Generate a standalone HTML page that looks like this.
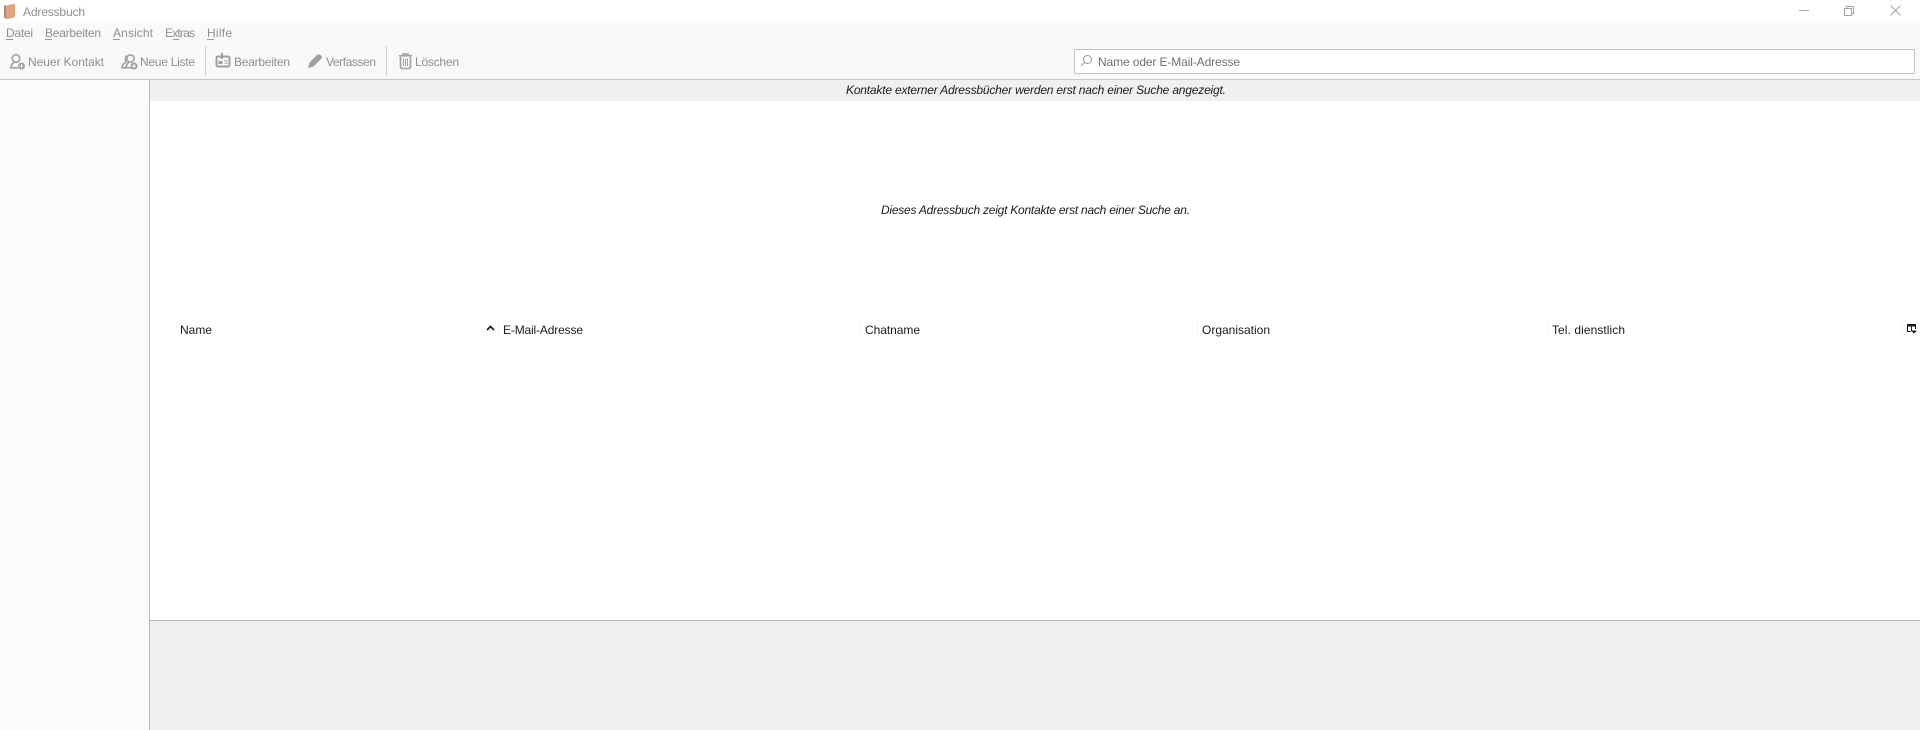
<!DOCTYPE html>
<html lang="de"><head><meta charset="utf-8"><title>Adressbuch</title>
<style>
html,body{margin:0;padding:0;width:1920px;height:730px;overflow:hidden;background:#fff}
svg{display:block}
text{font-family:"Liberation Sans",sans-serif;font-size:12px}
.g{fill:#8f8f8f}
.k{fill:#1a1a1a}
.i{font-style:italic;fill:#1a1a1a}
.s{fill:none;stroke:#a0a0a0;stroke-width:1.6}
.f{fill:#a0a0a0}
</style></head><body>
<svg width="1920" height="730" viewBox="0 0 1920 730" xmlns="http://www.w3.org/2000/svg">
<rect width="1920" height="730" fill="#fff"/>
<rect y="23" width="1920" height="56" fill="#f9f9fb"/>
<rect y="79" width="1920" height="1" fill="#c8c8ca"/>
<rect y="80" width="149" height="650" fill="#fbfbfb"/>
<rect x="150" y="80" width="1770" height="21" fill="#f0f0f0"/>
<rect x="150" y="620" width="1770" height="110" fill="#f0f0f0"/>
<rect x="150" y="620" width="1770" height="1" fill="#b8b8bc"/>
<rect x="149" y="80" width="1" height="650" fill="#b4b4bc"/>

<!-- app icon -->
<path d="M4 6 L13 4 V18 L7 19 Q4 18 4 16Z" fill="#c9c3bd"/>
<path d="M6 6 L15 3.5 V17 L6 19Z" fill="#e0a57f"/>
<path d="M4 5 L6 6 V19 L4 17Z" fill="#9a8f86"/>

<text class="g" x="23" y="16" textLength="62">Adressbuch</text>

<!-- menu -->
<text class="g" x="6" y="37" textLength="27">Datei</text>
<text class="g" x="45" y="37" textLength="56">Bearbeiten</text>
<text class="g" x="113" y="37" textLength="40">Ansicht</text>
<text class="g" x="165" y="37" textLength="30">Extras</text>
<text class="g" x="207" y="37" textLength="25">Hilfe</text>
<rect x="6" y="39" width="7" height="1" fill="#9a9a9a"/>
<rect x="45" y="39" width="7" height="1" fill="#9a9a9a"/>
<rect x="113" y="39" width="7" height="1" fill="#9a9a9a"/>
<rect x="173" y="39" width="6" height="1" fill="#9a9a9a"/>
<rect x="207" y="39" width="7" height="1" fill="#9a9a9a"/>

<!-- toolbar icons -->
<g>
<circle cx="16" cy="58.500" r="3.800" class="s"/>
<path class="s" d="M14 62.500 Q10.800 65 10.800 67.800 H18"/>
<circle cx="21.500" cy="66" r="3.500" fill="#a0a0a0"/>
<path d="M19.500 66H23.500M21.500 64V68" stroke="#fbfbfb" stroke-width="1"/>
</g>
<g>
<circle cx="130.500" cy="58.500" r="3.600" class="s"/>
<path class="s" d="M128.500 62.500 Q126 65 126 67.800 H132"/>
<path class="s" d="M126.500 55.500 Q124.500 59 126 62 Q122 64.500 122 67.800 H126"/>
<circle cx="134" cy="66" r="3.500" fill="#a0a0a0"/>
<path d="M132 66H136M134 64V68" stroke="#fbfbfb" stroke-width="1"/>
</g>
<rect x="205" y="46" width="1" height="30" fill="#cfcfd1"/>
<g>
<rect x="216.500" y="56.500" width="13" height="10" rx="1.500" fill="none" stroke="#a0a0a0" stroke-width="2"/>
<rect x="221" y="53" width="2" height="6" fill="#a0a0a0"/>
<rect x="224.500" y="60" width="3" height="1.200" fill="#a0a0a0"/>
<rect x="224.500" y="62.500" width="3" height="1.200" fill="#a0a0a0"/>
<rect x="218.500" y="61" width="4" height="3" fill="#a0a0a0"/>
</g>
<path class="f" d="M308 68 L309.500 62.500 L317 55 Q319 53.500 320.500 55 L321.500 56 Q322.500 57.500 321 59 L313.500 66.500Z"/>
<rect x="386" y="46" width="1" height="30" fill="#cfcfd1"/>
<g>
<path class="s" d="M400.500 57 V66.500 Q400.500 68.500 402.500 68.500 H408.500 Q410.500 68.500 410.500 66.500 V57"/>
<path class="s" d="M399 55.800 H412 M403 55.500 V54 H408 V55.500"/>
<path d="M403.500 58.500V66M405.500 58.500V66M407.500 58.500V66" stroke="#a0a0a0" stroke-width="1"/>
</g>

<!-- toolbar text -->
<text class="g" x="28" y="66" textLength="76">Neuer Kontakt</text>
<text class="g" x="140" y="66" textLength="55">Neue Liste</text>
<text class="g" x="234" y="66" textLength="56">Bearbeiten</text>
<text class="g" x="326" y="66" textLength="50">Verfassen</text>
<text class="g" x="415" y="66" textLength="44">Löschen</text>

<!-- search -->
<rect x="1074.500" y="49.500" width="840" height="24" rx="1.500" fill="#fff" stroke="#c2c2c2"/>
<circle cx="1087.500" cy="59.500" r="4" fill="none" stroke="#999"/>
<path d="M1084.500 62.500 L1081 66" stroke="#999" fill="none"/>
<text x="1098" y="66" fill="#707070" textLength="142">Name oder E-Mail-Adresse</text>

<!-- window controls -->
<rect x="1799" y="10" width="10" height="1" fill="#a5a5a5"/>
<path d="M1844.500 8.500H1851.500V15.500H1844.500Z M1846.500 8.500V6.500H1853.500V13.500H1851.500" fill="none" stroke="#a5a5a5"/>
<path d="M1890.500 5.500L1900.500 15.500M1900.500 5.500L1890.500 15.500" stroke="#a5a5a5" fill="none"/>

<!-- notifications -->
<text class="i" x="846" y="94" textLength="380">Kontakte externer Adressbücher werden erst nach einer Suche angezeigt.</text>
<text class="i" x="881" y="214" textLength="309">Dieses Adressbuch zeigt Kontakte erst nach einer Suche an.</text>

<!-- header -->
<text class="k" x="180" y="334" textLength="32">Name</text>
<path d="M487 330 L490.500 326.500 L494 330" fill="none" stroke="#1a1a1a" stroke-width="1.700"/>
<rect x="498" y="320" width="1" height="16" fill="#f6f6f6"/>
<text class="k" x="503" y="334" textLength="80">E-Mail-Adresse</text>
<rect x="860" y="320" width="1" height="16" fill="#f8f8f8"/>
<text class="k" x="865" y="334" textLength="55">Chatname</text>
<rect x="1197" y="320" width="1" height="16" fill="#f8f8f8"/>
<text class="k" x="1202" y="334" textLength="68">Organisation</text>
<rect x="1547" y="320" width="1" height="16" fill="#f8f8f8"/>
<text class="k" x="1552" y="334" textLength="73">Tel. dienstlich</text>
<rect x="1902" y="320" width="1" height="16" fill="#f6f6f6"/>
<path d="M1907.500 324.500V331.500H1911M1915.500 324.500V329M1911.500 325V331" fill="none" stroke="#1a1a1a"/>
<rect x="1907" y="324" width="9" height="2.500" fill="#1a1a1a"/>
<path d="M1911 330.500H1917L1914 333.500Z" fill="#1a1a1a"/>
</svg>
</body></html>
